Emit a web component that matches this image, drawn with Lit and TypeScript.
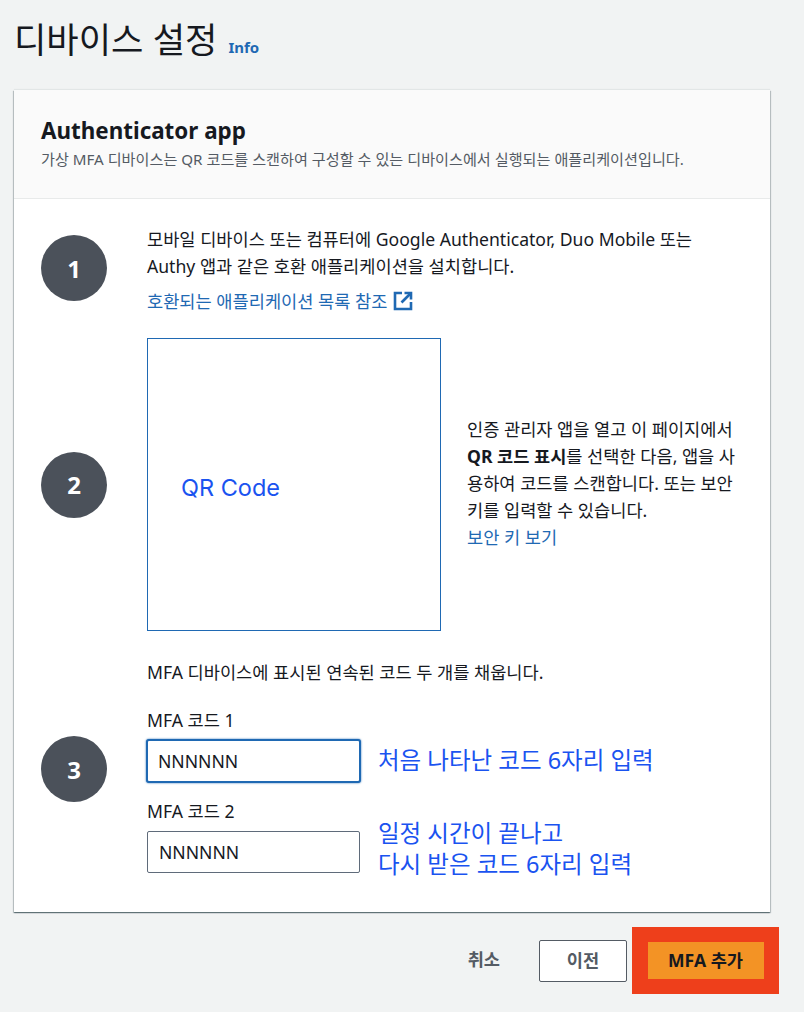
import { LitElement, html, css } from "lit";
import { customElement } from "lit/decorators.js";

@customElement("app-root")
export class AppRoot extends LitElement {
  static styles = css`
    :host {
      display: block;
      width: 804px;
      height: 1012px;
      overflow: hidden;
      background: #f1f3f3;
      color: #16191f;
      font-family: "Noto Sans", "Noto Sans CJK KR", sans-serif;
      font-size: 17.6px;
      box-sizing: border-box;
    }
    .page { padding: 17px 25px 0 14px; display: flex; flex-direction: column; }
    .title { display: flex; align-items: baseline; gap: 11px; height: 73px; }
    h1 { margin: 0; font-size: 35.2px; font-weight: 400; line-height: 44px; }
    .info { color: #1f69b3; font-size: 15px; font-weight: 700; margin-bottom: 1px; }
    .card {
      background: #fff;
      width: 756px;
      height: 822px;
      box-sizing: border-box;
      box-shadow: 0 1px 1px 0 rgba(0, 28, 36, 0.4), 1px 1px 1px 0 rgba(0, 28, 36, 0.18), -1px 1px 1px 0 rgba(0, 28, 36, 0.18), 0 -1px 1px 0 rgba(0, 28, 36, 0.06);
      display: flex;
      flex-direction: column;
    }
    .head {
      background: #fafafa;
      border-bottom: 1px solid #e8eaea;
      height: 109px;
      box-sizing: border-box;
      padding: 25px 27px 0;
    }
    h2 { margin: 0; font-size: 22.4px; font-weight: 700; line-height: 32px; }
    .desc { font-size: 15.15px; line-height: 20px; color: #545b64; margin-top: 2px; }
    .body { padding: 27px 27px 0; display: flex; flex-direction: column; }
    .step { display: flex; align-items: center; gap: 40px; }
    .num {
      width: 66px; height: 66px; border-radius: 50%;
      background: #4b515a; color: #fff;
      display: flex; align-items: center; justify-content: center;
      font-size: 24px; font-weight: 700; flex: none;
    }
    .s1 { align-items: flex-start; }
    .s1 .num { margin-top: 9px; }
    .text { line-height: 27px; }
    .s1 .text p { margin: 0; width: 570px; }
    a { color: #1f69b3; text-decoration: none; }
    .ext { display: flex; align-items: center; gap: 6px; margin-top: 8px; }
    .ext svg { margin-top: -2px; }
    .s2 { margin-top: 23px; }
    .qrwrap { display: flex; align-items: center; gap: 26px; }
    .qr {
      width: 294px; height: 293px; box-sizing: border-box;
      border: 1px solid #1f69b3; display: flex; align-items: center;
      padding: 5px 0 0 33px; color: #1a53f0; font-size: 23.5px; flex: none;
      font-family: Inter, sans-serif;
    }
    .qrtext { width: 274px; line-height: 27px; margin-top: -3px; }
    .qrtext a { display: block; }
    .s3 { margin-top: 28px; }
    .s3 .num { margin-bottom: 1px; }
    .fields { display: flex; flex-direction: column; }
    .fields p { margin: 0 0 21px; line-height: 27px; }
    label { display: block; line-height: 27px; margin-bottom: 5px; }
    label.second { margin-top: 15px; margin-bottom: 6px; }
    .row { display: flex; align-items: flex-start; gap: 18px; }
    .input {
      width: 213px; height: 42px; box-sizing: border-box;
      border: 1px solid #5f6b7a; border-radius: 2px; background: #fff;
      padding: 0 11px; display: flex; align-items: center; flex: none;
    }
    .input.focus { border: 2px solid #1f69b3; border-radius: 3px; width: 215px; height: 44px; padding: 0 10px; box-shadow: 0 0 2px #1f69b3; margin: 0 -1px; }
    .note { color: #1a53f0; font-size: 23.5px; line-height: 31px; margin-top: 6px; }
    .note.up { margin-top: -13px; }
    .actions { display: flex; justify-content: flex-end; align-items: center; margin-top: 15px; width: 765px; height: 67px; }
    .cancel { color: #545b64; font-weight: 700; margin-right: 39px; padding-bottom: 4px; }
    .prev {
      width: 88px; height: 42px; box-sizing: border-box; border: 1px solid #545b64; border-radius: 2px;
      background: #fff; color: #545b64; font-weight: 700; display: flex; align-items: center; justify-content: center;
      margin-right: 5px; padding-bottom: 3px;
    }
    .hl { background: #ee3f1b; width: 147px; height: 67px; display: flex; align-items: center; justify-content: center; }
    .add {
      width: 116px; height: 37px; box-sizing: border-box; padding-bottom: 3px; background: #f39325; color: #16191f; font-weight: 700;
      display: flex; align-items: center; justify-content: center; white-space: pre;
    }
  `;

  render() {
    return html`<div class="page">
      <div class="title"><h1>디바이스 설정</h1><a class="info">Info</a></div>
      <div class="card">
        <div class="head">
          <h2>Authenticator app</h2>
          <div class="desc">가상 MFA 디바이스는 QR 코드를 스캔하여 구성할 수 있는 디바이스에서 실행되는 애플리케이션입니다.</div>
        </div>
        <div class="body">
          <div class="step s1">
            <div class="num">1</div>
            <div class="text">
              <p>모바일 디바이스 또는 컴퓨터에 Google Authenticator, Duo Mobile 또는 Authy 앱과 같은 호환 애플리케이션을 설치합니다.</p>
              <a class="ext"><span>호환되는 애플리케이션 목록 참조</span>
                <svg width="20" height="20" viewBox="0 0 20 20" fill="none" stroke="#1f69b3" stroke-width="2.6">
                  <path d="M9 2H2v16h16v-7"/><path d="M11.5 2H18v6.5"/><path d="M18 2l-9.5 9.5"/>
                </svg>
              </a>
            </div>
          </div>
          <div class="step s2">
            <div class="num">2</div>
            <div class="qrwrap">
              <div class="qr">QR Code</div>
              <div class="qrtext">인증 관리자 앱을 열고 이 페이지에서 <b>QR 코드 표시</b>를 선택한 다음, 앱을 사용하여 코드를 스캔합니다. 또는 보안 키를 입력할 수 있습니다.
                <a>보안 키 보기</a></div>
            </div>
          </div>
          <div class="step s3">
            <div class="num">3</div>
            <div class="fields">
              <p>MFA 디바이스에 표시된 연속된 코드 두 개를 채웁니다.</p>
              <label>MFA 코드 1</label>
              <div class="row"><div class="input focus">NNNNNN</div><div class="note">처음 나타난 코드 6자리 입력</div></div>
              <label class="second">MFA 코드 2</label>
              <div class="row"><div class="input">NNNNNN</div><div class="note up">일정 시간이 끝나고<br />다시 받은 코드 6자리 입력</div></div>
            </div>
          </div>
        </div>
      </div>
      <div class="actions">
        <span class="cancel">취소</span>
        <div class="prev">이전</div>
        <div class="hl"><div class="add">MFA 추가</div></div>
      </div>
    </div>`;
  }
}
